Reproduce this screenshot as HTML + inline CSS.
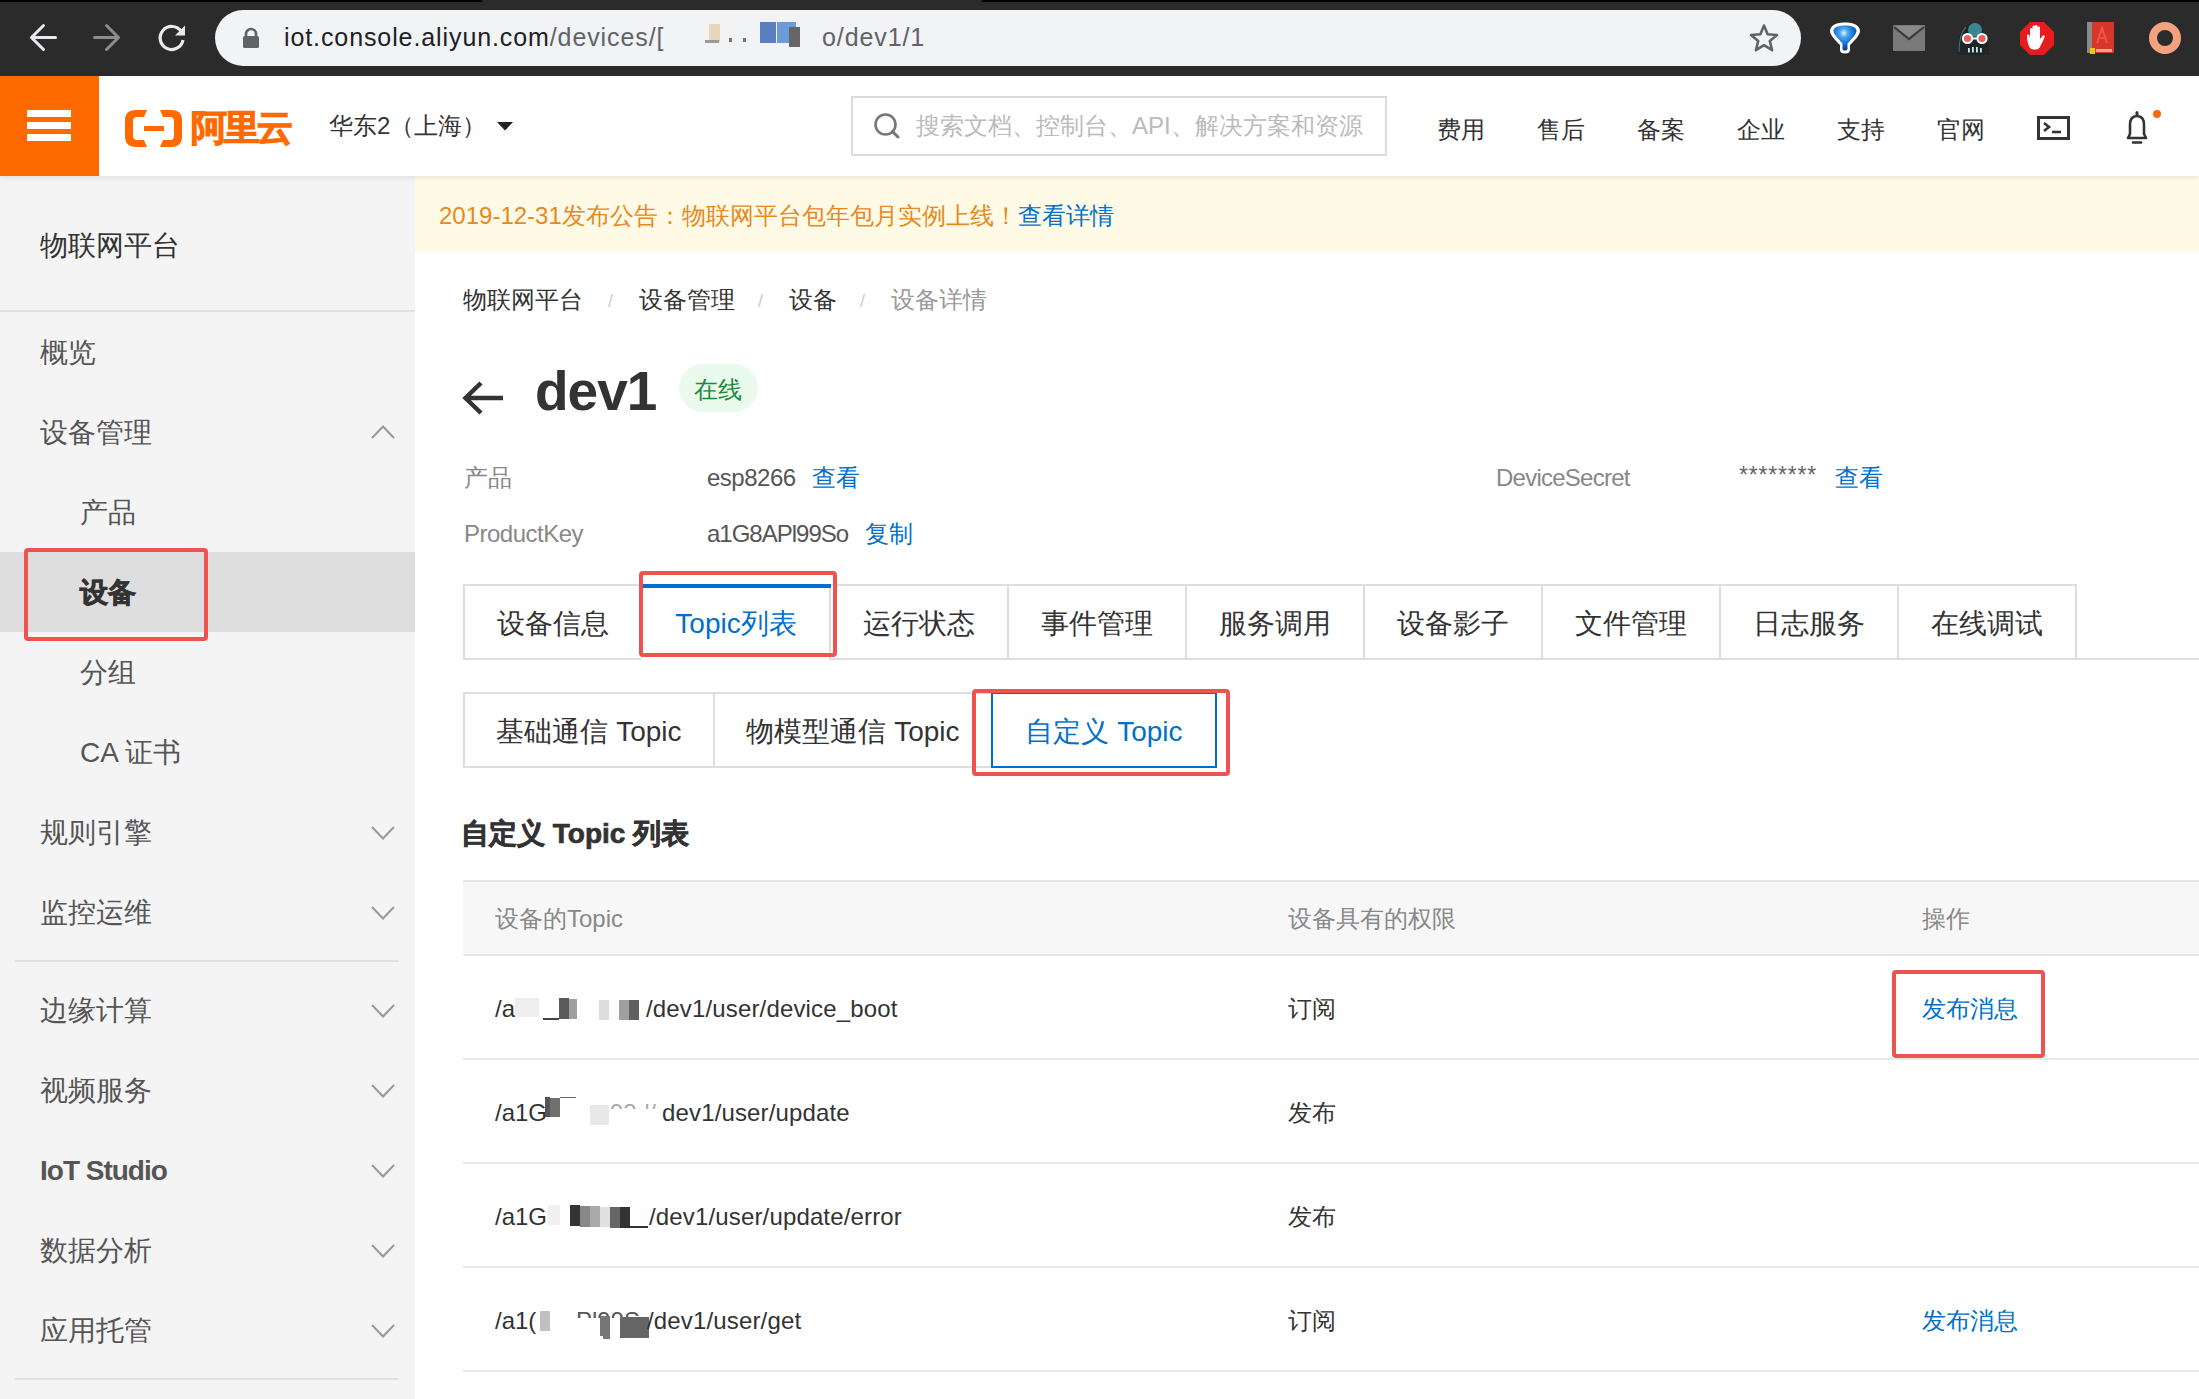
<!DOCTYPE html>
<html><head><meta charset="utf-8">
<style>
*{box-sizing:border-box;margin:0;padding:0}
html,body{width:2199px;height:1399px;overflow:hidden;background:#fff}
body{position:relative;font-family:"Liberation Sans",sans-serif;color:#333}
.a{position:absolute;white-space:nowrap;line-height:1}
.blue{color:#0070cc}
/* chrome */
#chrome{position:absolute;left:0;top:0;width:2199px;height:76px;background:#2b2b2b}
#url{position:absolute;left:215px;top:10px;width:1586px;height:56px;border-radius:28px;background:#f1f3f4}
/* header */
#hdr{position:absolute;left:0;top:76px;width:2199px;height:100px;background:#fff;box-shadow:0 2px 6px rgba(0,0,0,.08);z-index:3}
#burger{position:absolute;left:0;top:0;width:99px;height:100px;background:#ff6a00}
#burger i{position:absolute;left:27px;width:44px;height:7px;background:#fff}
/* sidebar */
#side{position:absolute;left:0;top:176px;width:415px;height:1223px;background:#f4f4f5}
.si{font-size:28px;color:#555}
.chev{position:absolute;left:371px;width:24px;height:14px}
/* main */
#notice{position:absolute;left:415px;top:176px;width:1784px;height:76px;background:#fffae6}
.tabs{position:absolute;top:584px;height:75px;border:2px solid #ddd;border-right:none}
.red{position:absolute;border:4px solid #ef5350;border-radius:4px;z-index:5}
.tbl-line{position:absolute;left:463px;width:1736px;height:2px;background:#e8e8e8}
</style></head><body>

<div id="chrome">
  <div style="position:absolute;left:982px;top:0;width:1217px;height:2px;background:#000"></div><div style="position:absolute;left:0;top:0;width:482px;height:2px;background:#000"></div>
  <svg class="a" style="left:0;top:0" width="215" height="76" viewBox="0 0 215 76">
    <g fill="none" stroke="#e8eaed" stroke-width="3" stroke-linecap="round" stroke-linejoin="round">
      <path d="M31.5 37.5H55.5M43.5 25.5L31.5 37.5L43.5 49.5"/>
    </g>
    <g fill="none" stroke="#8a8d91" stroke-width="3" stroke-linecap="round" stroke-linejoin="round">
      <path d="M94.5 37.5H118.5M106.5 25.5L118.5 37.5L106.5 49.5"/>
    </g>
    <path d="M181.2 31.5A11.5 11.5 0 1 0 183 40" fill="none" stroke="#e8eaed" stroke-width="3.2"/>
    <path d="M185 25.5V35.5H175Z" fill="#e8eaed"/>
  </svg>
  <div id="url">
    <svg class="a" style="left:26px;top:17px" width="20" height="22" viewBox="0 0 20 22">
      <path d="M5 10V7A5 5 0 0 1 15 7V10" fill="none" stroke="#5f6368" stroke-width="2.6"/>
      <rect x="2" y="9" width="16" height="12" rx="1.5" fill="#5f6368"/>
    </svg>
    <div class="a" style="left:69px;top:15px;font-size:25px;letter-spacing:0.9px;color:#202124">iot.console.aliyun.com<span style="color:#5f6368">/devices/[</span></div>
    <div class="a" style="left:494px;top:14px;width:11px;height:18px;background:#e6d6bc"></div>
    <div class="a" style="left:490px;top:30px;width:14px;height:3px;background:#9a9a9a"></div>
    <div class="a" style="left:514px;top:28px;width:3px;height:4px;background:#777"></div>
    <div class="a" style="left:528px;top:28px;width:3px;height:4px;background:#777"></div>
    <div class="a" style="left:545px;top:12px;width:16px;height:21px;background:#5a7fc0"></div><div class="a" style="left:562px;top:12px;width:19px;height:21px;background:#6b9bd9"></div>
    <div class="a" style="left:574px;top:17px;width:11px;height:20px;background:#666"></div>
    <div class="a" style="left:607px;top:15px;font-size:25px;letter-spacing:0.9px;color:#5f6368">o/dev1/1</div>
    <svg class="a" style="left:1533px;top:13px" width="32" height="30" viewBox="0 0 32 30">
      <path d="M16 2.5L19.6 11.3L29 12L21.8 18L24.1 27.2L16 22.2L7.9 27.2L10.2 18L3 12L12.4 11.3Z" fill="none" stroke="#5f6368" stroke-width="2.6" stroke-linejoin="round"/>
    </svg>
  </div>
  <svg class="a" style="left:1820px;top:15px" width="180" height="45" viewBox="1820 15 180 45">
    <defs><radialGradient id="dg" cx="0.45" cy="0.3" r="0.7"><stop offset="0" stop-color="#e8f4ff"/><stop offset="0.25" stop-color="#4aa8f0"/><stop offset="0.7" stop-color="#0a62c8"/><stop offset="1" stop-color="#063f8a"/></radialGradient></defs>
    <path d="M1845 22.5C1853 22.5 1860 25 1860 31C1860 35 1855 40 1850 45V50Q1850 53.5 1845 53.5Q1840 53.5 1840 50V45C1835 40 1830 35 1830 31C1830 25 1837 22.5 1845 22.5Z" fill="#fff"/>
    <path d="M1845 25.5C1851 25.5 1856.5 27 1856.5 31C1856.5 34 1852 38.5 1847.5 43.5V49Q1847.5 50.5 1845 50.5Q1842.5 50.5 1842.5 49V43.5C1838 38.5 1833.5 34 1833.5 31C1833.5 27 1839 25.5 1845 25.5Z" fill="url(#dg)"/>
    <rect x="1893" y="25" width="32" height="26" rx="1" fill="#7a7a7a"/>
    <path d="M1894 27L1909 39L1924 27" fill="none" stroke="#3a3a3a" stroke-width="2.2"/>
    <path d="M1895 26H1923L1909 37Z" fill="#8a8a8a"/>
    <path d="M1957 55C1957 40 1960 26 1973 24C1985 26 1989 40 1989 55Z" fill="#1f2629"/>
    <path d="M1959 52C1959 40 1962 31 1966 27" fill="none" stroke="#3d6f7a" stroke-width="1.2"/>
    <circle cx="1975" cy="30" r="7" fill="#3a8594"/>
    <circle cx="1967.5" cy="38.5" r="4.6" fill="#e0645a" stroke="#fff" stroke-width="2"/>
    <circle cx="1982" cy="38.5" r="4.6" fill="#e0645a" stroke="#fff" stroke-width="2"/>
    <rect x="1971.5" y="37.5" width="6.5" height="2" fill="#fff"/>
    <rect x="1968" y="48" width="1.8" height="4.5" fill="#cfe8ee"/><rect x="1972" y="47" width="1.8" height="5.5" fill="#cfe8ee"/><rect x="1976" y="47" width="1.8" height="5.5" fill="#cfe8ee"/><rect x="1980" y="48" width="1.8" height="4.5" fill="#cfe8ee"/>
  </svg>
  <svg class="a" style="left:2019px;top:21px" width="36" height="34" viewBox="0 0 36 34">
    <path d="M11 1H25L35 11V24L25 34H11L1 24V11Z" fill="#e81c1c"/>
    <path d="M11 27C9 24 8 19 8 15C8 13 10 13 10.5 15L11 18V8C11 6.5 13.5 6.5 13.5 8V15V5.5C13.5 4 16 4 16 5.5V15V5C16 3.5 18.5 3.5 18.5 5V15V6.5C18.5 5 21 5 21 6.5V18L23.5 15C24.5 13.5 26.5 14.5 25.5 16.5L21 26C20 28 18 28.5 16 28.5C13 28.5 12 28 11 27Z" fill="#fff"/>
  </svg>
  <svg class="a" style="left:2086px;top:21px" width="30" height="34" viewBox="0 0 30 34">
    <rect x="1" y="1" width="27" height="31" fill="#d9362b"/>
    <rect x="1" y="1" width="5" height="31" fill="#8a8a8a"/>
    <path d="M11 22L16 7L21 22M13 17H19" fill="none" stroke="#e8584a" stroke-width="2"/>
    <rect x="4" y="27" width="5" height="6" fill="#e6c619"/>
    <rect x="10" y="28" width="16" height="3" fill="#f3a39a"/>
  </svg>
  <svg class="a" style="left:2148px;top:21px" width="34" height="34" viewBox="0 0 34 34">
    <circle cx="17" cy="17" r="12" fill="none" stroke="#f3a27f" stroke-width="8"/>
  </svg>
</div>

<div id="hdr">
  <div id="burger"><i style="top:34px"></i><i style="top:46px"></i><i style="top:58px"></i></div>
  <svg class="a" style="left:124px;top:33px" width="62" height="40" viewBox="0 0 62 40">
    <path d="M23 1H12Q1 1 1 11V27Q1 38 12 38H23L20 31H13Q9 31 9 27V12Q9 8 13 8H20Z" fill="#ff6a00"/>
    <path d="M36 1H47Q58 1 58 11V27Q58 38 47 38H36L39 31H46Q50 31 50 27V12Q50 8 46 8H39Z" fill="#ff6a00"/>
    <rect x="20" y="17" width="20" height="5" fill="#ff6a00"/>
  </svg>
  <div class="a" style="left:191px;top:34px;font-size:36px;font-weight:bold;color:#ff6a00;letter-spacing:-3px;-webkit-text-stroke:1.2px #ff6a00">阿里云</div>
  <div class="a" style="left:329px;top:38px;font-size:24px;color:#333">华东2（上海）</div>
  <svg class="a" style="left:496px;top:45px" width="18" height="10" viewBox="0 0 18 10"><path d="M1 1H17L9 9.5Z" fill="#222"/></svg>
  <div class="a" style="left:851px;top:20px;width:536px;height:60px;border:2px solid #dcdcdc"></div>
  <svg class="a" style="left:873px;top:36px" width="28" height="28" viewBox="0 0 28 28">
    <circle cx="12.5" cy="12.5" r="10" fill="none" stroke="#777" stroke-width="2.6"/>
    <path d="M19.5 19.5L25 25" stroke="#777" stroke-width="3" stroke-linecap="round"/>
  </svg>
  <div class="a" style="left:916px;top:38px;font-size:24px;color:#bbb">搜索文档、控制台、API、解决方案和资源</div>
  <div class="a" style="left:1437px;top:42px;font-size:24px;color:#333">费用</div>
  <div class="a" style="left:1537px;top:42px;font-size:24px;color:#333">售后</div>
  <div class="a" style="left:1637px;top:42px;font-size:24px;color:#333">备案</div>
  <div class="a" style="left:1737px;top:42px;font-size:24px;color:#333">企业</div>
  <div class="a" style="left:1837px;top:42px;font-size:24px;color:#333">支持</div>
  <div class="a" style="left:1937px;top:42px;font-size:24px;color:#333">官网</div>
  <svg class="a" style="left:2037px;top:40px" width="34" height="26" viewBox="0 0 34 26">
    <rect x="1.5" y="1.5" width="30" height="21" fill="none" stroke="#333" stroke-width="3"/>
    <path d="M7 7L12 11L7 15" fill="none" stroke="#333" stroke-width="2.6"/>
    <path d="M15 16H24" stroke="#333" stroke-width="2.6"/>
  </svg>
  <svg class="a" style="left:2122px;top:34px" width="44" height="36" viewBox="0 0 44 36">
    <path d="M15 2.5V5" stroke="#333" stroke-width="3" stroke-linecap="round"/>
    <path d="M6 28H24L22 24V15Q22 6 15 6Q8 6 8 15V24Z" fill="none" stroke="#333" stroke-width="2.6" stroke-linejoin="round"/>
    <path d="M11 32.5H19" stroke="#333" stroke-width="2.6" stroke-linecap="round"/>
    <circle cx="35" cy="4" r="4" fill="#ff6a00"/>
  </svg>
</div>

<div id="side">
  <div class="a" style="left:40px;top:56px;font-size:28px;color:#333">物联网平台</div>
  <div class="a" style="left:0;top:134px;width:415px;height:2px;background:#e2e2e2"></div>
  <div class="a si" style="left:40px;top:163px">概览</div>
  <div class="a si" style="left:40px;top:243px">设备管理</div>
  <svg class="chev" style="top:249px" width="24" height="14" viewBox="0 0 24 14"><path d="M1 13L12 1.5L23 13" fill="none" stroke="#999" stroke-width="2"/></svg>
  <div class="a si" style="left:80px;top:323px">产品</div>
  <div class="a" style="left:0;top:376px;width:415px;height:80px;background:#dedede"></div>
  <div class="a si" style="left:80px;top:403px;font-weight:bold;color:#333;-webkit-text-stroke:0.8px #333">设备</div>
  <div class="a si" style="left:80px;top:483px">分组</div>
  <div class="a si" style="left:80px;top:563px">CA 证书</div>
  <div class="a si" style="left:40px;top:643px">规则引擎</div>
  <svg class="chev" style="top:650px" width="24" height="14" viewBox="0 0 24 14"><path d="M1 1L12 12.5L23 1" fill="none" stroke="#999" stroke-width="2"/></svg>
  <div class="a si" style="left:40px;top:723px">监控运维</div>
  <svg class="chev" style="top:730px" width="24" height="14" viewBox="0 0 24 14"><path d="M1 1L12 12.5L23 1" fill="none" stroke="#999" stroke-width="2"/></svg>
  <div class="a" style="left:15px;top:784px;width:384px;height:2px;background:#e2e2e2"></div>
  <div class="a si" style="left:40px;top:821px">边缘计算</div>
  <svg class="chev" style="top:828px" width="24" height="14" viewBox="0 0 24 14"><path d="M1 1L12 12.5L23 1" fill="none" stroke="#999" stroke-width="2"/></svg>
  <div class="a si" style="left:40px;top:901px">视频服务</div>
  <svg class="chev" style="top:908px" width="24" height="14" viewBox="0 0 24 14"><path d="M1 1L12 12.5L23 1" fill="none" stroke="#999" stroke-width="2"/></svg>
  <div class="a si" style="left:40px;top:981px;font-weight:bold;letter-spacing:-1px">IoT Studio</div>
  <svg class="chev" style="top:988px" width="24" height="14" viewBox="0 0 24 14"><path d="M1 1L12 12.5L23 1" fill="none" stroke="#999" stroke-width="2"/></svg>
  <div class="a si" style="left:40px;top:1061px">数据分析</div>
  <svg class="chev" style="top:1068px" width="24" height="14" viewBox="0 0 24 14"><path d="M1 1L12 12.5L23 1" fill="none" stroke="#999" stroke-width="2"/></svg>
  <div class="a si" style="left:40px;top:1141px">应用托管</div>
  <svg class="chev" style="top:1148px" width="24" height="14" viewBox="0 0 24 14"><path d="M1 1L12 12.5L23 1" fill="none" stroke="#999" stroke-width="2"/></svg>
  <div class="a" style="left:15px;top:1202px;width:384px;height:2px;background:#e2e2e2"></div>
</div>
<div class="red" style="left:24px;top:548px;width:184px;height:93px"></div>
<div id="notice">
  <div class="a" style="left:24px;top:28px;font-size:24px;color:#e8891d">2019-12-31发布公告：物联网平台包年包月实例上线！<span style="color:#0070cc">查看详情</span></div>
</div>
<div class="a" style="left:463px;top:288px;font-size:24px;color:#333">物联网平台</div>
<div class="a" style="left:608px;top:292px;font-size:18px;color:#ccc">/</div>
<div class="a" style="left:639px;top:288px;font-size:24px;color:#333">设备管理</div>
<div class="a" style="left:758px;top:292px;font-size:18px;color:#ccc">/</div>
<div class="a" style="left:789px;top:288px;font-size:24px;color:#333">设备</div>
<div class="a" style="left:860px;top:292px;font-size:18px;color:#ccc">/</div>
<div class="a" style="left:891px;top:288px;font-size:24px;color:#999">设备详情</div>

<svg class="a" style="left:460px;top:378px" width="46" height="40" viewBox="0 0 46 40">
  <path d="M43 20H6M21 5L5.5 20L21 35" fill="none" stroke="#333" stroke-width="4.5"/>
</svg>
<div class="a" style="left:535px;top:364px;font-size:55px;font-weight:bold;letter-spacing:-1px;color:#333">dev1</div>
<div class="a" style="left:679px;top:364px;width:79px;height:48px;border-radius:24px;background:#eafaed"></div>
<div class="a" style="left:694px;top:378px;font-size:24px;color:#1a8c3a">在线</div>

<div class="a" style="left:464px;top:466px;font-size:24px;color:#888">产品</div>
<div class="a" style="left:707px;top:466px;font-size:24px;color:#555;letter-spacing:-0.5px">esp8266</div>
<div class="a blue" style="left:812px;top:466px;font-size:24px">查看</div>
<div class="a" style="left:464px;top:522px;font-size:24px;color:#888;letter-spacing:-0.5px">ProductKey</div>
<div class="a" style="left:707px;top:522px;font-size:24px;color:#555;letter-spacing:-1px">a1G8APl99So</div>
<div class="a blue" style="left:865px;top:522px;font-size:24px">复制</div>
<div class="a" style="left:1496px;top:466px;font-size:24px;color:#888;letter-spacing:-0.75px">DeviceSecret</div>
<div class="a" style="left:1739px;top:464px;font-size:23px;letter-spacing:0.8px;color:#666">********</div>
<div class="a blue" style="left:1835px;top:466px;font-size:24px">查看</div>

<!-- tabs -->
<div class="a" style="left:463px;top:658px;width:1736px;height:2px;background:#ddd"></div>
<div class="a" style="left:463px;top:584px;width:180px;height:76px;border:2px solid #ddd;background:#fff;font-size:28px;line-height:76px;text-align:center;color:#333">设备信息</div>
<div class="a" style="left:641px;top:584px;width:190px;height:76px;border:2px solid #ddd;background:#fff;font-size:28px;line-height:76px;text-align:center;color:#0070cc">Topic列表</div>
<div class="a" style="left:829px;top:584px;width:180px;height:76px;border:2px solid #ddd;background:#fff;font-size:28px;line-height:76px;text-align:center;color:#333">运行状态</div>
<div class="a" style="left:1007px;top:584px;width:180px;height:76px;border:2px solid #ddd;background:#fff;font-size:28px;line-height:76px;text-align:center;color:#333">事件管理</div>
<div class="a" style="left:1185px;top:584px;width:180px;height:76px;border:2px solid #ddd;background:#fff;font-size:28px;line-height:76px;text-align:center;color:#333">服务调用</div>
<div class="a" style="left:1363px;top:584px;width:180px;height:76px;border:2px solid #ddd;background:#fff;font-size:28px;line-height:76px;text-align:center;color:#333">设备影子</div>
<div class="a" style="left:1541px;top:584px;width:180px;height:76px;border:2px solid #ddd;background:#fff;font-size:28px;line-height:76px;text-align:center;color:#333">文件管理</div>
<div class="a" style="left:1719px;top:584px;width:180px;height:76px;border:2px solid #ddd;background:#fff;font-size:28px;line-height:76px;text-align:center;color:#333">日志服务</div>
<div class="a" style="left:1897px;top:584px;width:180px;height:76px;border:2px solid #ddd;background:#fff;font-size:28px;line-height:76px;text-align:center;color:#333">在线调试</div>
<div class="a" style="left:641px;top:584px;width:190px;height:4px;background:#0070cc;z-index:2"></div>
<div class="a" style="left:641px;top:658px;width:188px;height:2px;background:#fff;z-index:2"></div>
<div class="red" style="left:639px;top:571px;width:198px;height:86px"></div>

<!-- subtabs -->
<div class="a" style="left:463px;top:692px;width:252px;height:76px;border:2px solid #ddd;font-size:28px;line-height:76px;text-align:center;color:#333">基础通信 Topic</div>
<div class="a" style="left:713px;top:692px;width:280px;height:76px;border:2px solid #ddd;font-size:28px;line-height:76px;text-align:center;color:#333">物模型通信 Topic</div>
<div class="a" style="left:991px;top:692px;width:226px;height:76px;border:2px solid #0070cc;font-size:28px;line-height:76px;text-align:center;color:#0070cc;z-index:2">自定义 Topic</div>
<div class="red" style="left:972px;top:689px;width:258px;height:87px"></div>

<div class="a" style="left:461px;top:820px;font-size:28px;font-weight:bold;color:#333;-webkit-text-stroke:0.7px #333">自定义 Topic 列表</div>

<!-- table -->
<div class="a" style="left:463px;top:880px;width:1736px;height:76px;background:#f7f7f7;border-top:2px solid #e6e6e6;border-bottom:2px solid #e6e6e6"></div>
<div class="a" style="left:495px;top:907px;font-size:24px;color:#888">设备的Topic</div>
<div class="a" style="left:1288px;top:907px;font-size:24px;color:#888">设备具有的权限</div>
<div class="a" style="left:1922px;top:907px;font-size:24px;color:#888">操作</div>
<div class="a" style="left:463px;top:1058px;width:1736px;height:2px;background:#e8e8e8"></div>
<div class="a" style="left:463px;top:1162px;width:1736px;height:2px;background:#e8e8e8"></div>
<div class="a" style="left:463px;top:1266px;width:1736px;height:2px;background:#e8e8e8"></div>
<div class="a" style="left:463px;top:1370px;width:1736px;height:2px;background:#e8e8e8"></div>
<div class="a" style="left:1288px;top:997px;font-size:24px;color:#333">订阅</div>
<div class="a blue" style="left:1922px;top:997px;font-size:24px">发布消息</div>
<div class="a" style="left:1288px;top:1101px;font-size:24px;color:#333">发布</div>
<div class="a" style="left:1288px;top:1205px;font-size:24px;color:#333">发布</div>
<div class="a" style="left:1288px;top:1309px;font-size:24px;color:#333">订阅</div>
<div class="a blue" style="left:1922px;top:1309px;font-size:24px">发布消息</div>
<div class="a" style="left:495px;top:997px;font-size:24px;color:#333">/a</div>
<div class="a" style="left:515px;top:998px;width:24px;height:19px;background:#eeeeee"></div>
<div class="a" style="left:543px;top:1018px;width:16px;height:2px;background:#444"></div>
<div class="a" style="left:559px;top:998px;width:10px;height:21px;background:#5a5a5a"></div>
<div class="a" style="left:569px;top:999px;width:8px;height:20px;background:#a0a0a0"></div>
<div class="a" style="left:599px;top:1000px;width:10px;height:20px;background:#dddddd"></div>
<div class="a" style="left:619px;top:1000px;width:10px;height:20px;background:#a0a0a0"></div>
<div class="a" style="left:629px;top:1000px;width:10px;height:20px;background:#606060"></div>
<div class="a" style="left:646px;top:997px;font-size:24px;letter-spacing:0.15px;color:#333">/dev1/user/device_boot</div>
<div class="a" style="left:495px;top:1101px;font-size:24px;color:#333">/a1G</div>
<div class="a" style="left:545px;top:1097px;width:5px;height:20px;background:#555"></div>
<div class="a" style="left:550px;top:1098px;width:10px;height:19px;background:#707070"></div>
<div class="a" style="left:560px;top:1097px;width:16px;height:1px;background:#666"></div>
<div class="a" style="left:590px;top:1105px;width:19px;height:20px;background:#e8e8e8"></div>
<div class="a" style="left:610px;top:1101px;height:8px;overflow:hidden;font-size:24px;color:#333;color:#aaa">93-'/</div>
<div class="a" style="left:662px;top:1101px;font-size:24px;letter-spacing:0.15px;color:#333">dev1/user/update</div>
<div class="a" style="left:495px;top:1205px;font-size:24px;color:#333">/a1G</div>
<div class="a" style="left:548px;top:1205px;width:12px;height:20px;background:#f0f0f0"></div>
<div class="a" style="left:570px;top:1205px;width:10px;height:21px;background:#333"></div>
<div class="a" style="left:580px;top:1206px;width:10px;height:21px;background:#888"></div>
<div class="a" style="left:590px;top:1206px;width:10px;height:21px;background:#aaa"></div>
<div class="a" style="left:600px;top:1207px;width:10px;height:20px;background:#e0e0e0"></div>
<div class="a" style="left:610px;top:1207px;width:10px;height:21px;background:#666"></div>
<div class="a" style="left:620px;top:1207px;width:10px;height:21px;background:#333"></div>
<div class="a" style="left:630px;top:1226px;width:18px;height:2px;background:#333"></div>
<div class="a" style="left:649px;top:1205px;font-size:24px;letter-spacing:0.15px;color:#333">/dev1/user/update/error</div>
<div class="a" style="left:495px;top:1309px;font-size:24px;color:#333">/a1(</div>
<div class="a" style="left:540px;top:1311px;width:10px;height:20px;background:#c0c0c0"></div>
<div class="a" style="left:576px;top:1309px;height:9px;overflow:hidden;font-size:24px;color:#333;color:#555">Pl99S</div>
<div class="a" style="left:600px;top:1316px;width:10px;height:20px;background:#777"></div>
<div class="a" style="left:603px;top:1336px;width:7px;height:3px;background:#777"></div>
<div class="a" style="left:620px;top:1317px;width:29px;height:21px;background:#666"></div>
<div class="a" style="left:647px;top:1309px;font-size:24px;letter-spacing:0.15px;color:#333">/dev1/user/get</div>
<div class="red" style="left:1892px;top:970px;width:153px;height:88px"></div>
</body></html>
